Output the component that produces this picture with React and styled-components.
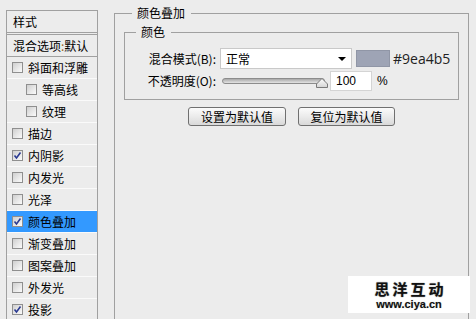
import React from "react";
import styled, { createGlobalStyle } from "styled-components";

const GlobalStyle = createGlobalStyle`
  html, body {
    margin: 0;
    padding: 0;
    background: #ececec;
  }
  body {
    font-family: "Noto Sans CJK SC", "Noto Sans", sans-serif;
    font-size: 12px;
    color: #000;
  }
`;

const styles = [
  { id: 1, label: "斜面和浮雕" },
  { id: 2, label: "等高线", indent: true },
  { id: 3, label: "纹理", indent: true },
  { id: 4, label: "描边" },
  { id: 5, label: "内阴影", checked: true },
  { id: 6, label: "内发光" },
  { id: 7, label: "光泽" },
  { id: 8, label: "颜色叠加", checked: true, active: true },
  { id: 9, label: "渐变叠加" },
  { id: 10, label: "图案叠加" },
  { id: 11, label: "外发光" },
  { id: 12, label: "投影", checked: true },
];

function Check({ checked }) {
  return (
    <Box>
      {checked && (
        <svg width="9" height="9" viewBox="0 0 9 9">
          <path
            d="M1.5 4.5 L3.5 7 L7.5 1.5"
            fill="none"
            stroke="#2a3a92"
            strokeWidth="1.6"
          />
        </svg>
      )}
    </Box>
  );
}

export default function App() {
  return (
    <Page>
      <GlobalStyle />
      {/* style list */}
      <Sidebar>
        <Head>样式</Head>
        <Head $second>
          混合选项<Colon>:</Colon>默认
        </Head>
        {styles.map((s) => (
          <Item key={s.id} $indent={s.indent} $active={s.active}>
            <Check checked={s.checked} />
            <span>{s.label}</span>
          </Item>
        ))}
      </Sidebar>

      <Group>
        <Legend $left={8}>颜色叠加</Legend>
        <Inner>
          <Legend $left={11}>颜色</Legend>
          <Row>
            <Label>混合模式(B):</Label>
            <Select>
              <span>正常</span>
              <Arrow />
            </Select>
            <Swatch $color="#9ea4b5" />
            <Hex>#9ea4b5</Hex>
          </Row>
          <Row $gap={1}>
            <Label>不透明度(O):</Label>
            <Slider>
              <Track />
              <Thumb width="14" height="11" viewBox="0 0 14 11">
                <defs>
                  <linearGradient id="tg" x1="0" y1="0" x2="0" y2="1">
                    <stop offset="0" stopColor="#ffffff" />
                    <stop offset="1" stopColor="#d4d4d4" />
                  </linearGradient>
                </defs>
                <path
                  d="M1.5 10.5 L1.5 7 L7 1.5 L12.5 7 L12.5 10.5 Z"
                  fill="url(#tg)"
                  stroke="#7a7a7a"
                />
              </Thumb>
            </Slider>
            <Input>100</Input>
            <Percent>%</Percent>
          </Row>
        </Inner>
        <Buttons>
          <Button $w={98}>设置为默认值</Button>
          <Button $w={97}>复位为默认值</Button>
        </Buttons>
      </Group>

      <Mark>
        <MarkTitle>思洋互动</MarkTitle>
        <MarkUrl>www.ciya.cn</MarkUrl>
      </Mark>
    </Page>
  );
}

const Page = styled.div`
  position: relative;
  display: flex;
  align-items: flex-start;
  width: 476px;
  height: 319px;
  overflow: hidden;
`;

const Sidebar = styled.div`
  margin: 10px 0 0 6px;
  width: 92px;
  height: 330px;
  box-sizing: border-box;
  border: 1px solid #a0a0a0;
  flex-shrink: 0;
`;

const Head = styled.div`
  height: 21px;
  line-height: 21px;
  padding-left: 6px;
  white-space: nowrap;
  border-bottom: 1px solid #a0a0a0;
  ${(p) => p.$second && "margin-top: 1px; border-top: 1px solid #a0a0a0;"}
`;

const Colon = styled.span`
  color: #9a6a1e;
`;

const Item = styled.div`
  display: flex;
  align-items: center;
  gap: 5px;
  height: 21px;
  padding-left: ${(p) => (p.$indent ? 19 : 5)}px;
  border-bottom: 1px solid #fafafa;
  background: ${(p) => (p.$active ? "#3399ff" : "transparent")};
  white-space: nowrap;
`;

const Box = styled.span`
  display: inline-flex;
  align-items: center;
  justify-content: center;
  width: 11px;
  height: 11px;
  box-sizing: border-box;
  border: 1px solid #8f8f8f;
  background: linear-gradient(135deg, #cfcfcf, #fbfbfb);
`;

const Group = styled.fieldset`
  margin: 5px 0 0 16px;
  padding: 3px 9px 0 9px;
  width: 355px;
  height: 330px;
  box-sizing: border-box;
  border: 1px solid #a0a0a0;
  min-width: 0;
`;

const Legend = styled.legend`
  margin-left: ${(p) => p.$left}px;
  padding: 0 6px 0 5px;
  font-size: 12px;
  line-height: 16px;
`;

const Inner = styled.fieldset`
  margin: 0;
  padding: 0 0 8px 0;
  border: 1px solid #a0a0a0;
  min-width: 0;
`;

const Row = styled.div`
  display: flex;
  align-items: center;
  margin-top: ${(p) => p.$gap ?? 8}px;
  height: 21px;
`;

const Label = styled.span`
  width: 91px;
  margin-right: 4px;
  text-align: right;
  white-space: nowrap;
`;

const Select = styled.div`
  display: flex;
  align-items: center;
  justify-content: space-between;
  width: 132px;
  height: 21px;
  box-sizing: border-box;
  padding: 0 5px 0 5px;
  background: #fff;
  border: 1px solid #c9c9c9;
`;

const Arrow = styled.span`
  width: 0;
  height: 0;
  border-left: 4px solid transparent;
  border-right: 4px solid transparent;
  border-top: 4px solid #000;
`;

const Swatch = styled.span`
  margin-left: 4px;
  width: 34px;
  height: 17px;
  box-sizing: border-box;
  border: 1px solid #9096a6;
  background: ${(p) => p.$color};
`;

const Hex = styled.span`
  margin-left: 3px;
  font-family: "Open Sans", "Liberation Sans", sans-serif;
  font-size: 14px;
  color: #222;
`;

const Slider = styled.div`
  position: relative;
  width: 110px;
  height: 20px;
`;

const Track = styled.div`
  position: absolute;
  left: 2px;
  right: 5px;
  top: 7px;
  height: 4px;
  border: 1px solid #8c8c8c;
  border-radius: 3px;
  background: linear-gradient(#a8a8a8, #e4e4e4);
`;

const Thumb = styled.svg`
  position: absolute;
  left: 95px;
  top: 6px;
`;

const Input = styled.div`
  width: 42px;
  height: 20px;
  box-sizing: border-box;
  padding-left: 5px;
  line-height: 18px;
  background: #fff;
  border: 1px solid #d4d4d4;
  font-family: "Liberation Sans", sans-serif;
`;

const Percent = styled.span`
  margin-left: 5px;
  font-family: "Liberation Sans", sans-serif;
`;

const Buttons = styled.div`
  display: flex;
  justify-content: center;
  gap: 12px;
  margin-top: 7px;
`;

const Button = styled.button`
  width: ${(p) => p.$w}px;
  height: 19px;
  padding: 0;
  font-family: inherit;
  font-size: 12px;
  line-height: 17px;
  color: #000;
  border: 1px solid #707070;
  border-radius: 3px;
  background: linear-gradient(#fbfbfb, #ebebeb 50%, #d9d9d9);
`;

const Mark = styled.div`
  position: absolute;
  left: 348px;
  top: 276px;
  width: 122px;
  height: 37px;
  box-sizing: border-box;
  padding-top: 5px;
  background: #fff;
  display: flex;
  flex-direction: column;
  align-items: center;
  gap: 2px;
`;

const MarkTitle = styled.div`
  font-size: 15px;
  line-height: 16px;
  font-weight: 700;
  letter-spacing: 3px;
  margin-right: -3px;
  color: #111;
  text-shadow: 0 0 1px #999, 0 0 1px #999;
`;

const MarkUrl = styled.div`
  font-family: "Liberation Sans", sans-serif;
  font-size: 11px;
  line-height: 11px;
  font-weight: 700;
  color: #111;
  text-shadow: 0 0 1px #aaa;
`;
